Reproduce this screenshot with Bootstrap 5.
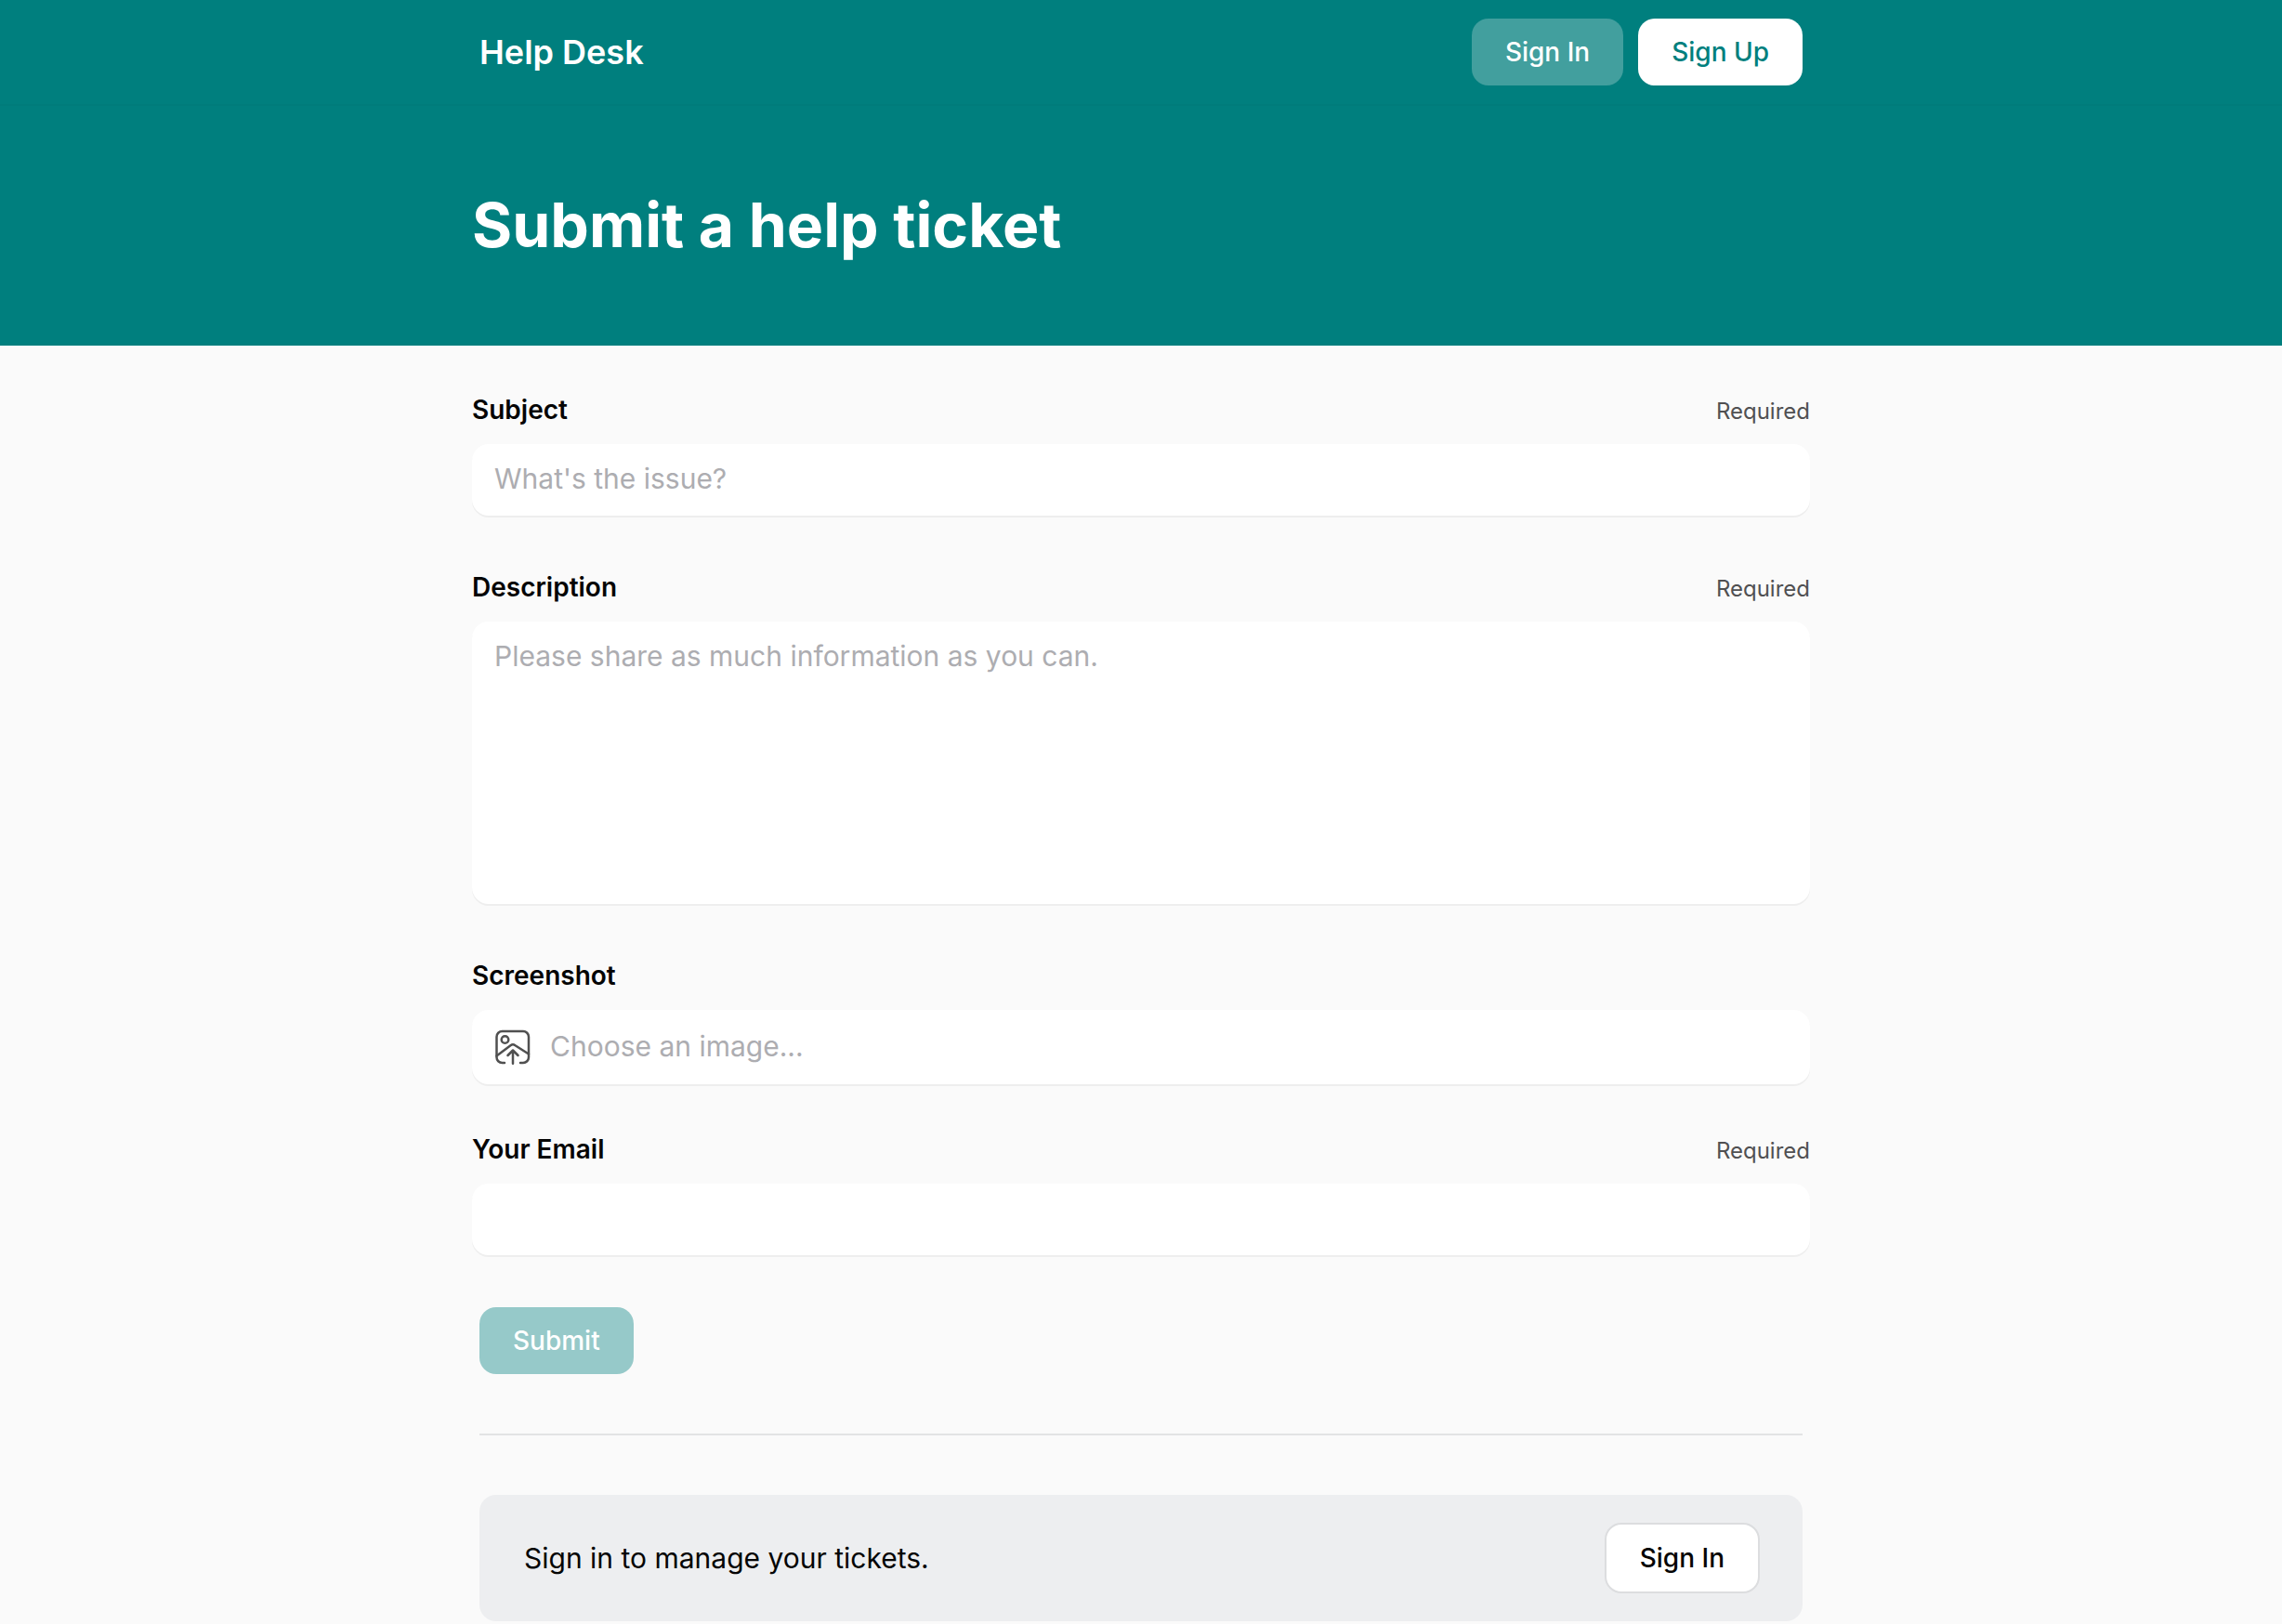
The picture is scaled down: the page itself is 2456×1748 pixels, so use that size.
<!DOCTYPE html>
<html lang="en">
<head>
<meta charset="utf-8">
<meta name="viewport" content="width=device-width, initial-scale=1">
<title>Help Desk</title>
<link href="https://cdn.jsdelivr.net/npm/bootstrap@5.3.0/dist/css/bootstrap.min.css" rel="stylesheet">
<style>
  :root { --teal: #007f7e; --radius: 18px; }
  body { font-family: Inter, "Liberation Sans", sans-serif; background: #fafafa; color: #050505; font-size: 30px; }
  .page-column { max-width: 1440px; }
  .hero { background: var(--teal); }
  .top-bar { min-height: 114px; border-bottom: 2px solid #007c7b; }
  .navbar-brand { font-size: 36px; line-height: 44px; font-weight: 600; }
  .hero-title { font-size: 66px; line-height: 80px; font-weight: 700; padding: 88px 0 90px; }
  .btn-desk { font-size: 28px; line-height: 36px; font-weight: 500; padding: 18px 36px; border: 0; border-radius: var(--radius); }
  .btn-glass, .btn-glass:hover { background: #429f9e; color: #fff; }
  .btn-plain, .btn-plain:hover { background: #fff; color: var(--teal); }
  .btn-send, .btn-send:disabled { background: #96c9c9; color: #fff; opacity: 1; }
  .btn-line, .btn-line:hover { background: #fff; color: #050505; border: 2px solid #dcdddf; }
  .ticket-form { padding-top: 52px; }
  .field { margin-bottom: 60px; }
  .field-file { margin-bottom: 53px; }
  .field-last { margin-bottom: 56px; }
  .field-head { line-height: 34px; min-height: 36px; margin-bottom: 18px; }
  .field-head label { font-size: 28px; font-weight: 600; }
  .field-note { font-size: 24px; color: #505052; }
  .field-box, .field-box:focus { font-size: 30px; line-height: 38px; padding: 18px 24px 21px; min-height: 77px; border: 0; border-radius: var(--radius); background: #fff; box-shadow: 0 2px 0 #eeeeee; color: #050505; }
  .field-box::placeholder, .file-hint { color: #adadb1; font-weight: 380; opacity: 1; }
  textarea.field-box { height: 304px; resize: none; display: block; }
  .file-box { min-height: 80px; gap: 20px; cursor: pointer; }
  .file-box svg { width: 40px; height: 40px; color: #505050; }
  .rule { height: 2px; background: #e2e3e4; opacity: 1; border: 0; margin: 64px 0; }
  .signin-panel { background: #edeef0; border-radius: var(--radius); padding: 30px 46px 30px 48px; }
</style>
</head>
<body>
<header class="hero">
  <nav class="navbar top-bar p-0">
    <div class="page-column w-100 mx-auto px-2 d-flex align-items-center justify-content-between">
      <a class="navbar-brand text-white p-0 m-0" href="#">Help Desk</a>
      <div class="d-flex gap-3">
        <button type="button" class="btn btn-desk btn-glass">Sign In</button>
        <button type="button" class="btn btn-desk btn-plain">Sign Up</button>
      </div>
    </div>
  </nav>
  <div class="page-column mx-auto">
    <h1 class="hero-title text-white m-0">Submit a help ticket</h1>
  </div>
</header>
<main class="page-column mx-auto pb-1">
  <form class="ticket-form">
    <div class="field">
      <div class="field-head d-flex align-items-baseline justify-content-between">
        <label for="subject">Subject</label><span class="field-note">Required</span>
      </div>
      <input id="subject" type="text" class="form-control field-box" placeholder="What's the issue?">
    </div>
    <div class="field">
      <div class="field-head d-flex align-items-baseline justify-content-between">
        <label for="description">Description</label><span class="field-note">Required</span>
      </div>
      <textarea id="description" class="form-control field-box" placeholder="Please share as much information as you can."></textarea>
    </div>
    <div class="field-file">
      <div class="field-head d-flex align-items-baseline justify-content-between">
        <label for="screenshot">Screenshot</label>
      </div>
      <label class="form-control field-box file-box d-flex align-items-center" for="screenshot">
        <svg viewBox="0 -2 40 40" fill="none" stroke="currentColor" stroke-width="2.5" stroke-linecap="round" stroke-linejoin="round" aria-hidden="true">
          <path d="M11 36H8.500A6 6 0 0 1 2.500 30V8A6 6 0 0 1 8.500 2H31A6 6 0 0 1 37 8V30A6 6 0 0 1 31 36H28"/>
          <circle cx="11.500" cy="11" r="3.800"/>
          <path d="M2.500 28.500L17.500 17.200Q20 15.500 22.500 17.200L37 26.500"/>
          <path d="M20 36.700V22.500M14.500 28L20 22.500L25.500 28"/>
        </svg>
        <span class="file-hint">Choose an image...</span>
      </label>
      <input id="screenshot" type="file" accept="image/*" class="visually-hidden">
    </div>
    <div class="field-last">
      <div class="field-head d-flex align-items-baseline justify-content-between">
        <label for="email">Your Email</label><span class="field-note">Required</span>
      </div>
      <input id="email" type="email" class="form-control field-box">
    </div>
    <div class="px-2">
      <button type="submit" class="btn btn-desk btn-send d-block" disabled>Submit</button>
    </div>
  </form>
  <div class="px-2">
    <hr class="rule">
    <section class="signin-panel d-flex align-items-center justify-content-between">
      <span>Sign in to manage your tickets.</span>
      <button type="button" class="btn btn-desk btn-line">Sign In</button>
    </section>
  </div>
</main>
<script src="https://cdn.jsdelivr.net/npm/bootstrap@5.3.0/dist/js/bootstrap.bundle.min.js"></script>
</body>
</html>
